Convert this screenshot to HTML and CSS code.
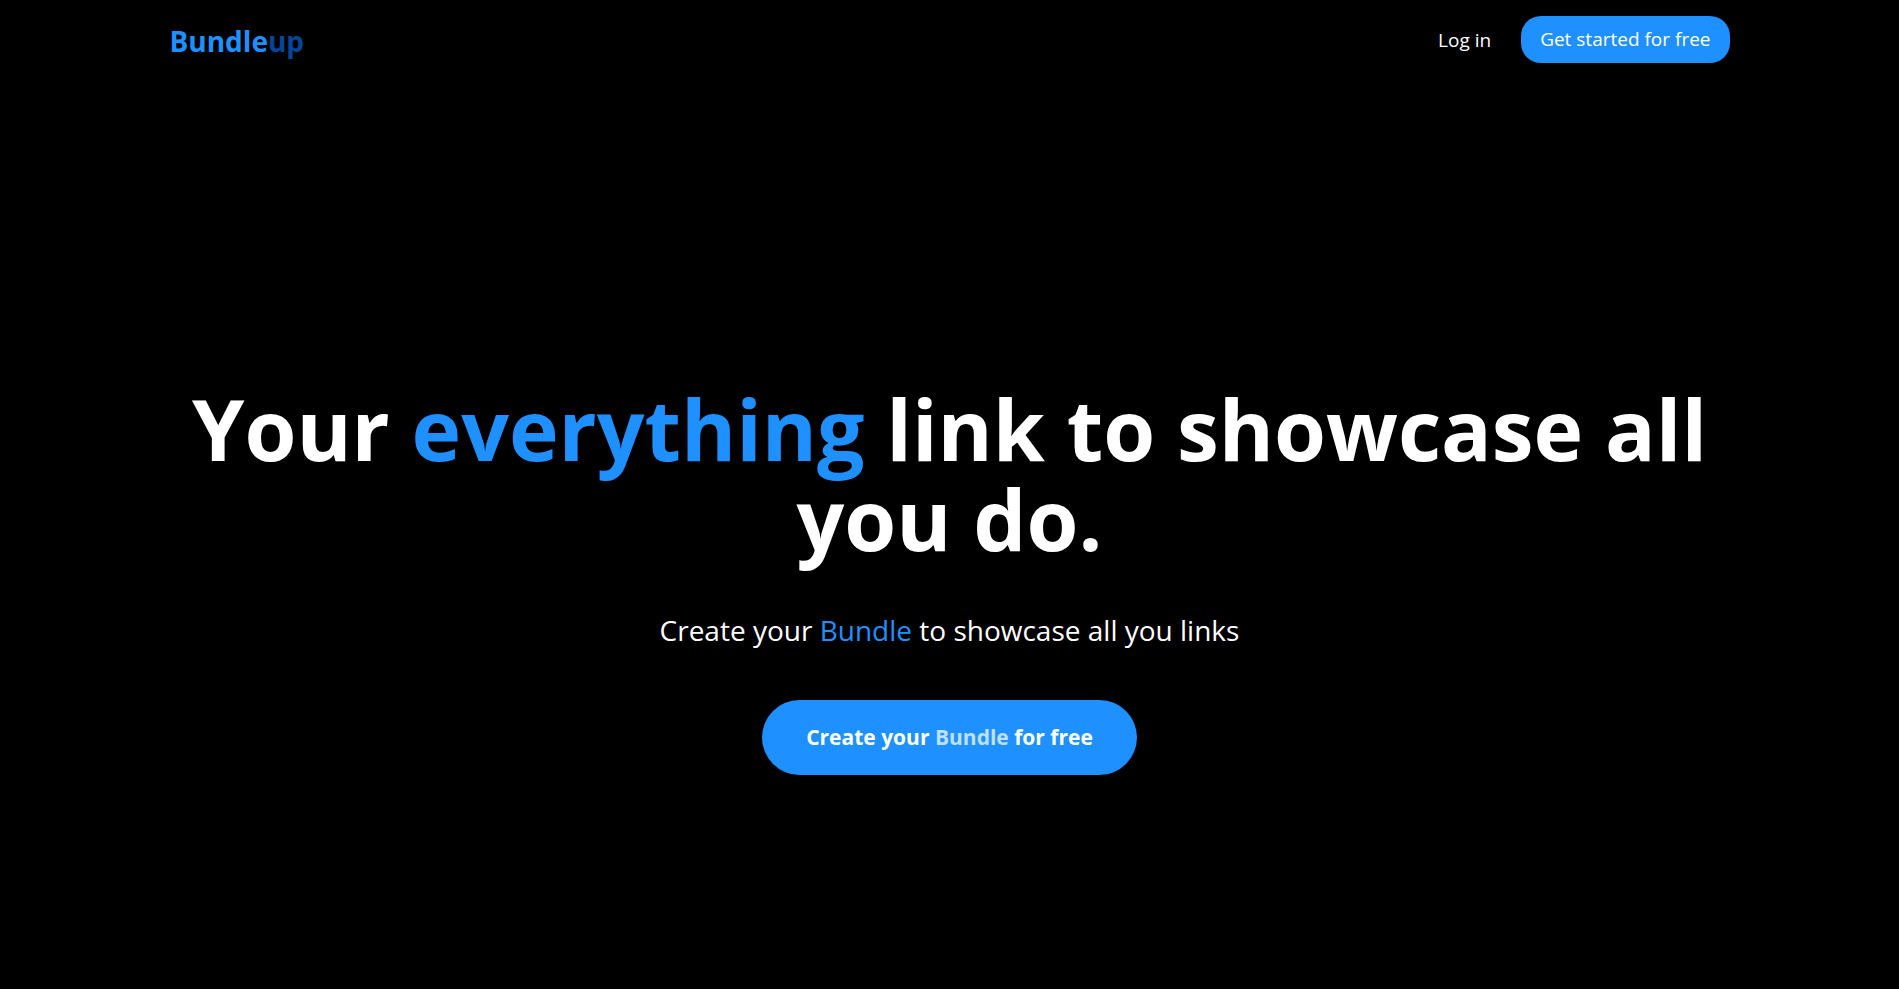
FILE: index.html
```html
<!DOCTYPE html>
<html lang="en">
<head>
<meta charset="utf-8">
<meta name="viewport" content="width=device-width, initial-scale=1">
<title>Bundleup</title>
<link rel="stylesheet" href="styles.css">
</head>
<body>
<header class="header">
  <a class="logo" href="#">Bundle<span class="logo-dark">up</span></a>
  <nav class="nav">
    <a class="nav-link" href="#">Log in</a>
    <a class="nav-button" href="#">Get started for free</a>
  </nav>
</header>
<main class="hero">
  <h1 class="title">Your <span class="accent">everything</span> link to showcase all you do.</h1>
  <p class="subtitle">Create your <span class="accent">Bundle</span> to showcase all you links</p>
  <a class="cta" href="#">Create your <span class="cta-soft">Bundle</span> for free</a>
</main>
</body>
</html>
```

FILE: styles.css
```css
* {
  box-sizing: border-box;
}

body {
  margin: 0;
  min-height: 100vh;
  display: flex;
  flex-direction: column;
  background: #000;
  color: #fff;
  font-family: "Segoe UI", "Open Sans", "Noto Sans", sans-serif;
}

a {
  color: inherit;
  text-decoration: none;
}

.header,
.hero {
  width: 100%;
  max-width: 1600px;
  margin: 0 auto;
  padding: 16px 20px;
}

.header {
  display: flex;
  align-items: center;
  justify-content: space-between;
}

.logo {
  padding-top: 2px;
  font-size: 28px;
  line-height: 40px;
  font-weight: 700;
  color: #1e90ff;
}

.logo-dark {
  color: #04479a;
}

.nav {
  display: flex;
  align-items: center;
  gap: 30px;
  font-size: 19px;
}

.nav-button {
  padding: 10px 19px;
  line-height: 27px;
  border-radius: 20px;
  background: #1e90ff;
}

.hero {
  flex: 1;
  display: flex;
  flex-direction: column;
  align-items: center;
  justify-content: center;
  padding: 90px 20px 0;
  text-align: center;
}

.title {
  margin: 0;
  font-size: 84px;
  line-height: 90px;
  font-weight: 700;
}

.subtitle {
  margin: 46px 0 50px;
  font-size: 28px;
  line-height: 40px;
}

.accent {
  color: #1e90ff;
}

.cta {
  padding: 22px 44px;
  border-radius: 40px;
  background: #1e90ff;
  font-size: 21px;
  line-height: 31px;
  font-weight: 700;
}

.cta-soft {
  color: #bfe1ff;
}
```
